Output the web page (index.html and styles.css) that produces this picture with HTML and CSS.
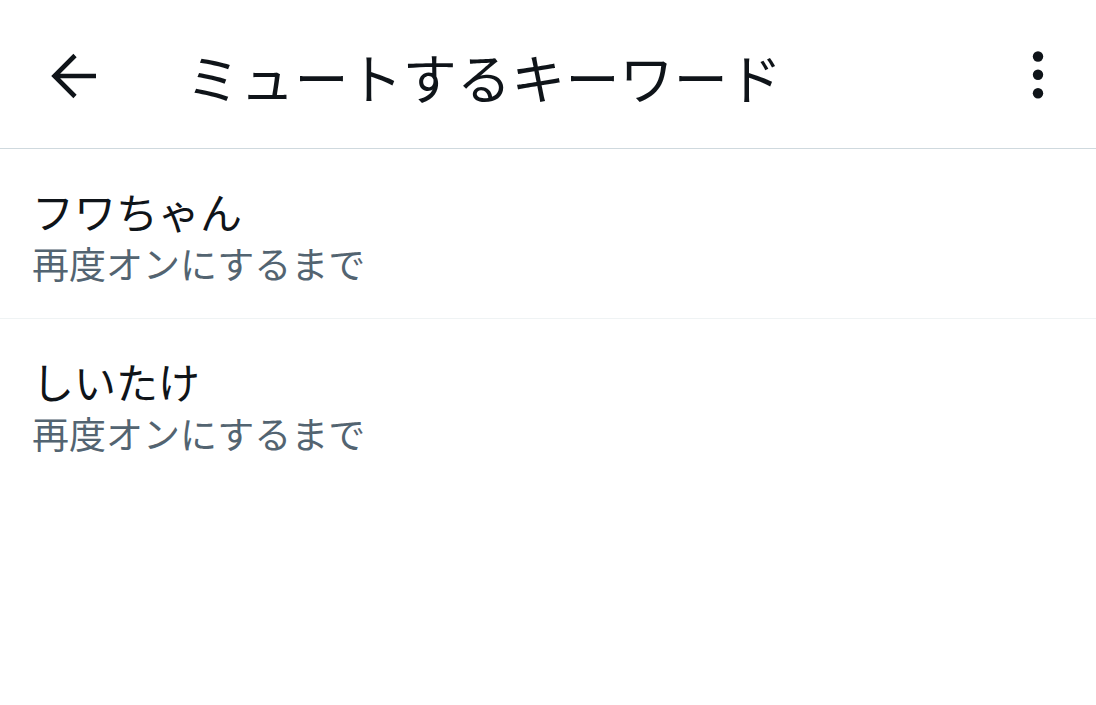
FILE: index.html
```html
<!DOCTYPE html>
<html lang="ja">

<head>
    <meta charset="UTF-8">
    <meta name="viewport" content="width=device-width, initial-scale=1.0">
    <title>ミュートするキーワード</title>
    <link rel="stylesheet" href="styles.css">
</head>

<body>
    <header class="topbar">
        <button class="icon-btn back" aria-label="戻る">
            <svg width="48" height="48" viewBox="0 0 48 48">
                <path d="M5 24H46M25 3.5L4.5 24L25 44.5" fill="none" stroke="#0f1419" stroke-width="4.6" />
            </svg>
        </button>
        <h1 class="title">ミュートするキーワード</h1>
        <button class="icon-btn more" aria-label="その他">
            <svg width="20" height="52" viewBox="0 0 20 52">
                <circle cx="10" cy="7.5" r="5.2" fill="#0f1419" />
                <circle cx="10" cy="25.8" r="5.2" fill="#0f1419" />
                <circle cx="10" cy="44.2" r="5.2" fill="#0f1419" />
            </svg>
        </button>
    </header>

    <ul class="list">
        <li class="row">
            <div class="word">フワちゃん</div>
            <div class="until">再度オンにするまで</div>
        </li>
        <li class="row">
            <div class="word">しいたけ</div>
            <div class="until">再度オンにするまで</div>
        </li>
    </ul>
</body>

</html>
```
FILE: styles.css
```css
body {
    margin: 0;
    background: #ffffff;
    font-family: "Noto Sans CJK JP", "Noto Sans", sans-serif;
    color: #0f1419;
}

.topbar {
    display: flex;
    align-items: center;
    height: 148px;
    padding: 0 48px 0 50px;
    border-bottom: 1px solid #cfd9de;
}

.icon-btn {
    display: flex;
    align-items: center;
    justify-content: center;
    padding: 0;
    border: none;
    background: none;
}

.back {
    width: 48px;
    height: 48px;
    margin-top: 4px;
}

.title {
    margin: 5px 0 0 88px;
    font-size: 54px;
    font-weight: 400;
    line-height: 64px;
    letter-spacing: 0.2px;
}

.more {
    margin-left: auto;
    margin-top: 2px;
}

.list {
    margin: 0;
    padding: 0;
    list-style: none;
}

.row {
    padding: 36px 34px 31px 32px;
    border-bottom: 1px solid #eff3f4;
}

.row:last-child {
    border-bottom: none;
}

.word {
    font-size: 42px;
    line-height: 52px;
}

.until {
    margin-top: 2px;
    font-size: 37px;
    line-height: 48px;
    color: #536471;
}
```
